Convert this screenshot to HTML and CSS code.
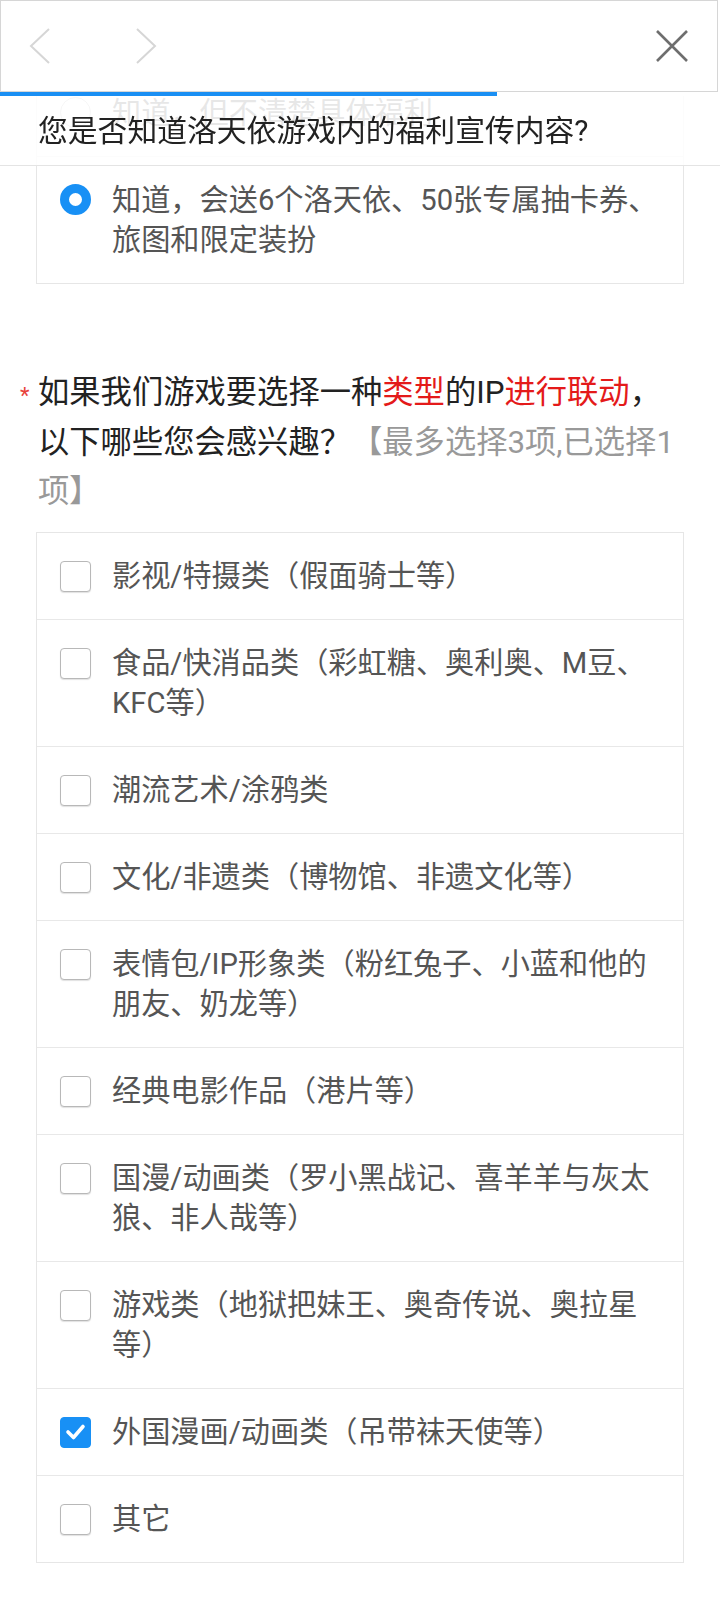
FILE: index.html
```html
<!DOCTYPE html>
<html lang="zh-CN">
<head>
<meta charset="utf-8">
<title>问卷</title>
<link rel="stylesheet" href="styles.css">
</head>
<body>
<header class="topbar">
  <div class="nav">
    <svg class="chev" width="24" height="40" viewBox="0 0 24 40"><path d="M21 3 L3 20 L21 37" fill="none" stroke="#d6d6d6" stroke-width="2"/></svg>
    <svg class="chev chev-next" width="24" height="40" viewBox="0 0 24 40"><path d="M3 3 L21 20 L3 37" fill="none" stroke="#d6d6d6" stroke-width="2"/></svg>
  </div>
  <svg class="close" width="34" height="34" viewBox="0 0 34 34"><path d="M2 2 L32 32 M32 2 L2 32" fill="none" stroke="#6e6e6e" stroke-width="2.6"/></svg>
</header>
<div class="progress"><div class="progress-fill" style="width:497px"></div></div>
<div class="sticky-title">您是否知道洛天依游戏内的福利宣传内容?</div>

<main class="survey">
  <section class="question q-first">
    <div class="options">
      <div class="opt">
        <span class="radio"></span>
        <span class="opt-text">知道，但不清楚具体福利</span>
      </div>
      <div class="opt">
        <span class="radio radio-on"></span>
        <span class="opt-text">知道，会送6个洛天依、50张专属抽卡券、旅图和限定装扮</span>
      </div>
    </div>
  </section>

  <section class="question q-second">
    <div class="q-title"><span class="req">*</span>如果我们游戏要选择一种<span class="hl">类型</span>的IP<span class="hl">进行联动</span>，以下哪些您会感兴趣？<span class="hint">【最多选择3项,已选择1项】</span></div>
    <div class="options">
      <div class="opt"><span class="check"></span><span class="opt-text">影视/特摄类（假面骑士等）</span></div>
      <div class="opt"><span class="check"></span><span class="opt-text">食品/快消品类（彩虹糖、奥利奥、M豆、KFC等）</span></div>
      <div class="opt"><span class="check"></span><span class="opt-text">潮流艺术/涂鸦类</span></div>
      <div class="opt"><span class="check"></span><span class="opt-text">文化/非遗类（博物馆、非遗文化等）</span></div>
      <div class="opt"><span class="check"></span><span class="opt-text">表情包/IP形象类（粉红兔子、小蓝和他的朋友、奶龙等）</span></div>
      <div class="opt"><span class="check"></span><span class="opt-text">经典电影作品（港片等）</span></div>
      <div class="opt"><span class="check"></span><span class="opt-text">国漫/动画类（罗小黑战记、喜羊羊与灰太狼、非人哉等）</span></div>
      <div class="opt"><span class="check"></span><span class="opt-text">游戏类（地狱把妹王、奥奇传说、奥拉星等）</span></div>
      <div class="opt"><span class="check check-on"><svg width="31" height="31" viewBox="0 0 31 31"><path d="M8 16 L13.5 21.5 L23 10.5" fill="none" stroke="#fff" stroke-width="3.6" stroke-linecap="round" stroke-linejoin="round"/></svg></span><span class="opt-text">外国漫画/动画类（吊带袜天使等）</span></div>
      <div class="opt"><span class="check"></span><span class="opt-text">其它</span></div>
    </div>
  </section>
</main>
</body>
</html>
```

FILE: styles.css
```css
* { box-sizing: border-box; }
html, body { margin: 0; padding: 0; background: #fff; }
body {
  font-family: Roboto, "Noto Sans CJK SC", sans-serif;
  color: #222;
  width: 720px;
}

.topbar {
  position: fixed;
  top: 0; left: 0;
  width: 718px;
  height: 92px;
  background: #fff;
  border: 1px solid #d6d6d6;
  display: flex;
  align-items: center;
  justify-content: space-between;
  padding: 0 28px 0 27px;
  z-index: 5;
}
.nav { display: flex; align-items: center; gap: 82px; }
.chev { display: block; }
.close { display: block; }

.progress {
  position: fixed;
  top: 92px; left: 0;
  width: 720px;
  height: 4px;
  background: #fff;
  z-index: 5;
}
.progress-fill { height: 4px; background: #1a8ff3; }

.sticky-title {
  position: fixed;
  top: 96px; left: 0;
  width: 720px;
  padding: 10px 36px 9px 38px;
  font-size: 29.8px;
  line-height: 50px;
  color: #222;
  background: rgba(255,255,255,0.86);
  border-bottom: 1px solid #e4e4e4;
  z-index: 4;
}

.survey { padding: 69px 36px 0 36px; }

.options { border: 1px solid #e6e6e6; }
.opt {
  display: flex;
  align-items: flex-start;
  padding: 23px 20px 23px 23px;
  border-bottom: 1px solid #e8e8e8;
}
.opt:last-child { border-bottom: none; }
.opt-text {
  font-size: 29.2px;
  line-height: 40px;
  color: #555;
  flex: 1;
}

.radio {
  flex: none;
  width: 31px; height: 31px;
  border-radius: 50%;
  border: 1.5px solid #bdbdbd;
  margin: 4px 21px 0 0;
}
.radio-on { border: 9.5px solid #1890f5; }

.check {
  flex: none;
  width: 31px; height: 31px;
  border-radius: 4px;
  border: 1.5px solid #b8b8b8;
  box-shadow: 0 1px 1px rgba(0,0,0,0.12);
  margin: 5px 21px 0 0;
  background: #fff;
}
.check-on {
  background: #1890f5;
  border-color: #1890f5;
  box-shadow: none;
  display: flex;
}
.check-on svg { display: block; margin: -1.5px; }

.q-second { margin-top: 84px; }
.q-title {
  font-size: 31.3px;
  line-height: 49.5px;
  color: #222;
  padding-left: 2px;
  margin-bottom: 15px;
}
.req {
  display: inline-block;
  width: 18px;
  margin-left: -18px;
  color: #e8423b;
  font-size: 22px;
  line-height: 1;
}
.hl { color: #e41a1a; }
.hint { color: #999; }
```
